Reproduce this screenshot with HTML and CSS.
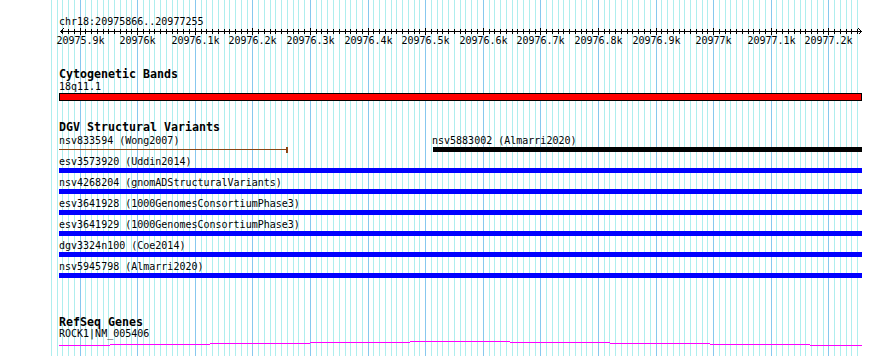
FILE: index.html
```html
<!DOCTYPE html>
<html lang="en">
<head>
    <meta charset="UTF-8">
    <title>chr18:20975866..20977255</title>
    <link rel="stylesheet" href="styles.css">
</head>
<body>
    <div class="browser">
        <svg class="grid" id="grid" width="890" height="356"></svg>
        <div class="panel">
            <div class="ref-label">chr18:20975866..20977255</div>
            <svg class="scale" id="scale" width="890" height="20"></svg>

            <div class="track track-cyto">
                <div class="track-title">Cytogenetic Bands</div>
                <div class="lanes">
                    <div class="lane lane-band">
                        <span class="label" style="left:59px">18q11.1</span>
                        <div class="band" style="left:59px;width:803px"></div>
                    </div>
                </div>
            </div>

            <div class="track track-dgv">
                <div class="track-title">DGV Structural Variants</div>
                <div class="lanes">
                    <div class="lane">
                        <span class="label" style="left:59px">nsv833594 (Wong2007)</span>
                        <div class="span-line" style="left:59px;width:228px"></div>
                        <div class="span-cap" style="left:286px"></div>
                        <span class="label" style="left:432px">nsv5883002 (Almarri2020)</span>
                        <div class="bar black" style="left:433px;width:429px"></div>
                    </div>
                    <div class="lane">
                        <span class="label" style="left:59px">esv3573920 (Uddin2014)</span>
                        <div class="bar blue" style="left:59px;width:803px"></div>
                    </div>
                    <div class="lane">
                        <span class="label" style="left:59px">nsv4268204 (gnomADStructuralVariants)</span>
                        <div class="bar blue" style="left:59px;width:803px"></div>
                    </div>
                    <div class="lane">
                        <span class="label" style="left:59px">esv3641928 (1000GenomesConsortiumPhase3)</span>
                        <div class="bar blue" style="left:59px;width:803px"></div>
                    </div>
                    <div class="lane">
                        <span class="label" style="left:59px">esv3641929 (1000GenomesConsortiumPhase3)</span>
                        <div class="bar blue" style="left:59px;width:803px"></div>
                    </div>
                    <div class="lane">
                        <span class="label" style="left:59px">dgv3324n100 (Coe2014)</span>
                        <div class="bar blue" style="left:59px;width:803px"></div>
                    </div>
                    <div class="lane">
                        <span class="label" style="left:59px">nsv5945798 (Almarri2020)</span>
                        <div class="bar blue" style="left:59px;width:803px"></div>
                    </div>
                </div>
            </div>

            <div class="track track-refseq">
                <div class="track-title">RefSeq Genes</div>
                <div class="lanes">
                    <div class="lane lane-gene">
                        <span class="label" style="left:59px">ROCK1|NM_005406</span>
                        <svg class="gene" id="gene" width="890" height="6"></svg>
                    </div>
                </div>
            </div>
        </div>
    </div>

    <script>
        const START = 20975866;
        const END = 20977255;
        const X0 = 60;
        const WIDTH = 800;
        const NS = 'http://www.w3.org/2000/svg';

        function xOf(bp) {
            return Math.round(X0 + (bp - START) * WIDTH / (END - START));
        }

        function add(svg, tag, attrs, text) {
            const el = document.createElementNS(NS, tag);
            for (const k in attrs) el.setAttribute(k, attrs[k]);
            if (text) el.textContent = text;
            svg.appendChild(el);
            return el;
        }

        // grid lines every 10bp, darker every 100bp
        const grid = document.getElementById('grid');
        for (let b = 20975850; b <= 20977250; b += 10) {
            const x = xOf(b) + 0.5;
            add(grid, 'line', {x1: x, x2: x, y1: 0, y2: 356, class: b % 100 === 0 ? 'major' : 'minor'});
        }

        // ruler
        const scale = document.getElementById('scale');
        add(scale, 'line', {x1: 60, x2: 862, y1: 3.5, y2: 3.5, class: 'axis'});
        add(scale, 'path', {d: 'M63.5 0.5 L60.5 3.5 L63.5 6.5', class: 'axis'});
        add(scale, 'path', {d: 'M858.5 0.5 L861.5 3.5 L858.5 6.5', class: 'axis'});
        for (let b = 20975870; b <= 20977250; b += 10) {
            const x = xOf(b) + 0.5;
            const major = b % 100 === 0;
            add(scale, 'line', {x1: x, x2: x, y1: major ? 0 : 1, y2: major ? 7 : 6, class: 'axis'});
            if (major) {
                add(scale, 'text', {x: x, y: 15.5, class: 'tick-label'}, (b / 1000) + 'k');
            }
        }

        // refseq gene line
        const gene = document.getElementById('gene');
        const steps = [[59, 110, 5], [110, 210, 4], [210, 310, 3], [310, 410, 2], [410, 510, 1],
                       [510, 610, 2], [610, 710, 3], [710, 810, 4], [810, 862, 5]];
        steps.forEach(s => {
            add(gene, 'line', {x1: s[0], x2: s[1], y1: s[2] + 0.5, y2: s[2] + 0.5, class: 'gene-line'});
        });
    </script>
</body>
</html>
```

FILE: styles.css
```css
body {
    margin: 0;
    background: #fff;
    font-family: "DejaVu Sans Mono", "Liberation Mono", monospace;
    font-size: 10px;
    color: #000;
}
.browser {
    position: relative;
    width: 890px;
    height: 356px;
    overflow: hidden;
    background: #fff;
}
.grid {
    position: absolute;
    top: 0;
    left: 0;
}
.grid .minor {
    stroke: #aeeeee;
    stroke-width: 1;
}
.grid .major {
    stroke: #87c8ee;
    stroke-width: 1;
}
.panel {
    position: relative;
    display: flex;
    flex-direction: column;
    padding-top: 16px;
}
.ref-label {
    height: 12px;
    line-height: 12px;
    padding-left: 59px;
    white-space: pre;
}
.scale {
    display: block;
    height: 20px;
}
.scale .axis {
    stroke: #000;
    stroke-width: 1;
    fill: none;
    shape-rendering: crispEdges;
}
.tick-label {
    font-family: "DejaVu Sans Mono", "Liberation Mono", monospace;
    font-size: 10px;
    text-anchor: middle;
    fill: #000;
}
.track {
    display: flex;
    flex-direction: column;
    margin-top: 20px;
}
.track-title {
    height: 13px;
    line-height: 13px;
    padding-left: 59px;
    font-weight: bold;
    font-size: 11.63px;
}
.lanes {
    display: flex;
    flex-direction: column;
}
.track-dgv .lanes {
    gap: 4px;
    margin-top: 1px;
}
.track-refseq {
    margin-top: 38px;
}
.track-refseq .lanes {
    margin-top: -1px;
}
.lane {
    position: relative;
    height: 17px;
}
.lane-band {
    height: 20px;
}
.lane-gene {
    height: 18px;
}
.label {
    position: absolute;
    top: 0;
    height: 12px;
    line-height: 12px;
    white-space: pre;
}
.band {
    position: absolute;
    top: 12px;
    height: 8px;
    box-sizing: border-box;
    border: 1px solid #000;
    background: #f00;
}
.bar {
    position: absolute;
    top: 12px;
    height: 5px;
}
.bar.blue {
    background: #00f;
}
.bar.black {
    background: #000;
}
.span-line {
    position: absolute;
    top: 14px;
    height: 1px;
    background: #8b4513;
}
.span-cap {
    position: absolute;
    top: 12px;
    width: 2px;
    height: 6px;
    background: #8b4513;
}
.gene {
    position: absolute;
    top: 12px;
    left: 0;
}
.gene-line {
    stroke: #f0f;
    stroke-width: 1;
    shape-rendering: crispEdges;
}
```
